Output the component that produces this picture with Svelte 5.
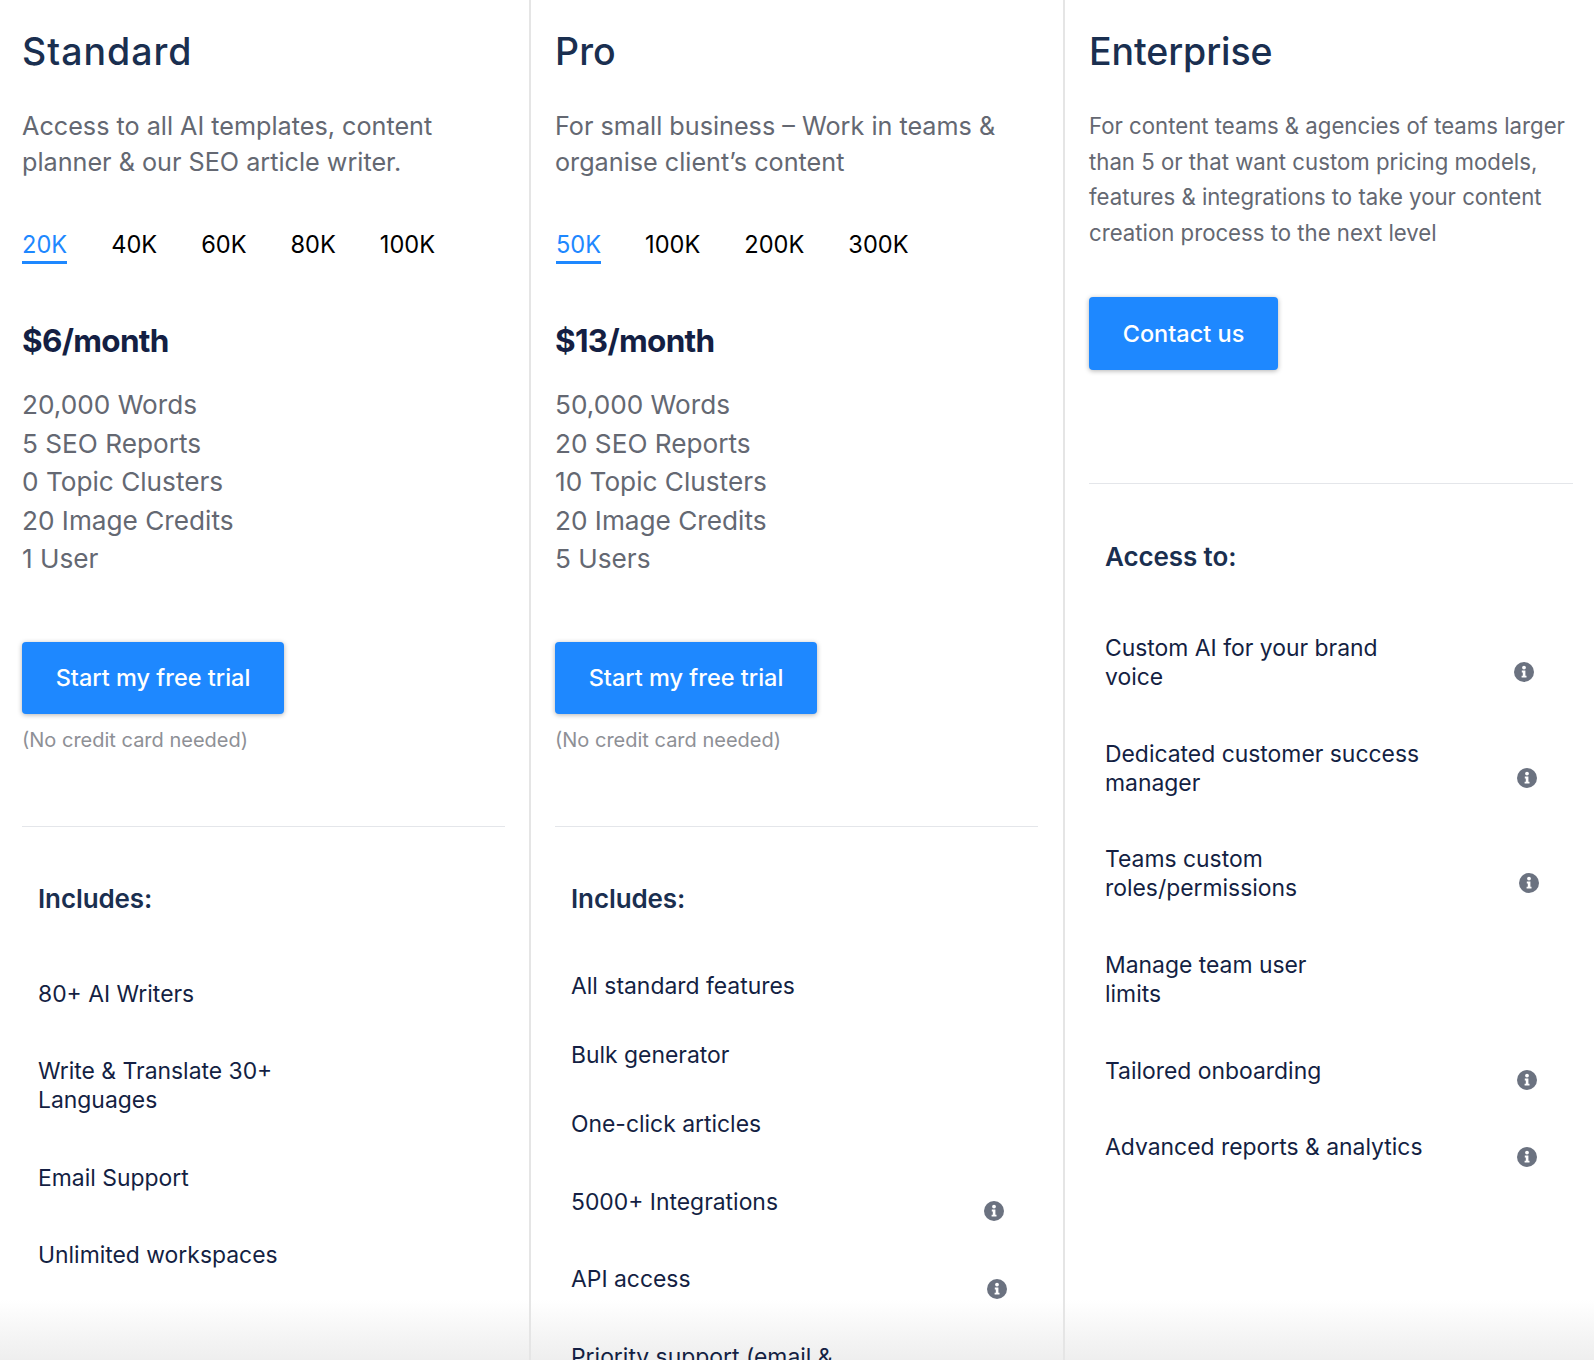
<script>
  const plans = [
    {
      name: 'Standard', ls: 1, desc: 'Access to all AI templates, content planner & our SEO article writer.',
      tabs: ['20K', '40K', '60K', '80K', '100K'], price: '$6/month',
      features: ['20,000 Words', '5 SEO Reports', '0 Topic Clusters', '20 Image Credits', '1 User'],
      head: 'Includes:', lead: 60,
      items: [
        { t: '80+ AI Writers' },
        { t: 'Write & Translate 30+\nLanguages' },
        { t: 'Email Support' },
        { t: 'Unlimited workspaces' }
      ]
    },
    {
      name: 'Pro', ls: 0.1, desc: 'For small business – Work in teams & organise client’s content',
      tabs: ['50K', '100K', '200K', '300K'], price: '$13/month',
      features: ['50,000 Words', '20 SEO Reports', '10 Topic Clusters', '20 Image Credits', '5 Users'],
      head: 'Includes:', lead: 52,
      items: [
        { t: 'All standard features', gap: 40 },
        { t: 'Bulk generator', gap: 40 },
        { t: 'One-click articles', gap: 49 },
        { t: '5000+ Integrations', icon: 413 },
        { t: 'API access', icon: 416 },
        { t: 'Priority support (email &\nchat)' }
      ]
    }
  ];
  const ent = {
    name: 'Enterprise', ls: -0.1,
    desc: 'For content teams & agencies of teams larger than 5 or that want custom pricing models, features & integrations to take your content creation process to the next level',
    items: [
      { t: 'Custom AI for your brand\nvoice', icon: 409, gap: 47.7 },
      { t: 'Dedicated customer success\nmanager', icon: 412, gap: 47.7 },
      { t: 'Teams custom\nroles/permissions', icon: 414, gap: 47.7 },
      { t: 'Manage team user\nlimits', gap: 47.7 },
      { t: 'Tailored onboarding', icon: 412, gap: 47.7 },
      { t: 'Advanced reports & analytics', icon: 412 }
    ]
  };
</script>

{#snippet info(left)}
  <svg class="info" style="left:{left}px" viewBox="0 0 20 20" aria-hidden="true">
    <circle cx="10" cy="10" r="10" fill="#6b7280" />
    <circle cx="10" cy="5.6" r="1.9" fill="#fff" />
    <path d="M7.8 8.6h3.6v5.2h1.1v1.8H7.6v-1.8h1.2v-3.4h-1z" fill="#fff" />
  </svg>
{/snippet}

{#snippet list(items)}
  <ul class="items">
    {#each items as it}
      <li class="item" style="margin-bottom:{it.gap ?? 48.5}px">
        <span class="item-text">{it.t}</span>
        {#if it.icon}{@render info(it.icon)}{/if}
      </li>
    {/each}
  </ul>
{/snippet}

<main class="page">
  <div class="fade"></div>
  {#each plans as p}
    <section class="col">
      <h2 style="letter-spacing:{p.ls}px">{p.name}</h2>
      <p class="desc">{p.desc}</p>
      <div class="tabs">
        {#each p.tabs as tab, i}
          <span class="tab" class:active={i === 0}>{tab}</span>
        {/each}
      </div>
      <div class="price">{p.price}</div>
      <ul class="features">
        {#each p.features as f}<li>{f}</li>{/each}
      </ul>
      <button class="cta">Start my free trial</button>
      <div class="note">(No credit card needed)</div>
      <hr />
      <div class="inner">
        <h3 style="margin-bottom:{p.lead}px">{p.head}</h3>
        {@render list(p.items)}
      </div>
    </section>
  {/each}
  <section class="col last">
    <h2 style="letter-spacing:{ent.ls}px">{ent.name}</h2>
    <p class="desc small">{ent.desc}</p>
    <button class="cta contact">Contact us</button>
    <hr class="hr-ent" />
    <div class="inner">
      <h3 class="ent-head">Access to:</h3>
      {@render list(ent.items)}
    </div>
  </section>
</main>

<style>
  :global(body) { margin: 0; background: #fff; }
  .page {
    position: relative;
    display: grid;
    grid-template-columns: 531px 534px 1fr;
    height: 1360px;
    overflow: hidden;
    font-family: Inter, "Open Sans", sans-serif;
  }
  .col { position: relative; padding: 30px 0 0 22px; border-right: 2px solid #e5e5e5; min-width: 0; box-sizing: border-box; }
  .col:nth-child(3) { padding-left: 24px; }
  .col.last { border-right: 0; padding-left: 24px; }
  h2 { margin: 0; font-size: 37.5px; line-height: 44px; font-weight: 500; color: #1a2f50; }
  .desc { margin: 34px 0 0; width: 470px; font-size: 25.2px; line-height: 36px; color: #646872; }
  .desc.small { width: 490px; font-size: 22.2px; line-height: 35.5px; }
  .tabs { display: flex; gap: 44px; margin-top: 50px; }
  .col:nth-child(3) .tabs { padding-left: 1px; }
  .tab { font-size: 23.6px; line-height: 30px; color: #000; padding-bottom: 1px; }
  .tab.active { color: #1e88ff; border-bottom: 3px solid #1e88ff; }
  .price { margin-top: 55px; font-size: 31.5px; line-height: 44px; font-weight: 700; color: #141f43; letter-spacing: -0.7px; }
  .features { list-style: none; margin: 23px 0 0; padding: 0; font-size: 26.2px; line-height: 38.5px; color: #646872; }
  .cta {
    display: block; width: 262px; height: 72px; margin-top: 63px; padding: 0;
    border: 0; border-radius: 4px; background: #1e88ff; color: #fff;
    font: 500 23.5px/1 Inter, sans-serif; box-shadow: 0 1px 5px rgba(0,0,0,.3);
  }
  .contact { width: 189px; height: 73px; margin-top: 47px; }
  .note { margin-top: 12px; font-size: 20px; line-height: 28px; color: #8e9096; }
  hr { width: 483px; height: 1px; margin: 72px 0 0; border: 0; background: #e4e6ea; }
  .hr-ent { width: 484px; margin-top: 113px; }
  .inner { padding: 0 0 0 16px; }
  h3 { margin: 50px 0 0; font-size: 26px; line-height: 43px; font-weight: 600; color: #1a2f50; letter-spacing: -0.1px; }
  .ent-head { margin-top: 51px; margin-bottom: 56px; }
  .items { list-style: none; margin: 0; padding: 0; }
  .item { position: relative; color: #141f43; font-size: 22.9px; line-height: 29px; min-height: 29px; }
  .item-text { display: block; white-space: pre; }
  .info { position: absolute; top: calc(50% - 1px); width: 20px; height: 20px; }
  .fade {
    position: absolute; left: 0; right: 0; bottom: 0; height: 60px;
    background: linear-gradient(to bottom, rgba(238,238,238,0), rgba(238,238,238,1));
  }
</style>
